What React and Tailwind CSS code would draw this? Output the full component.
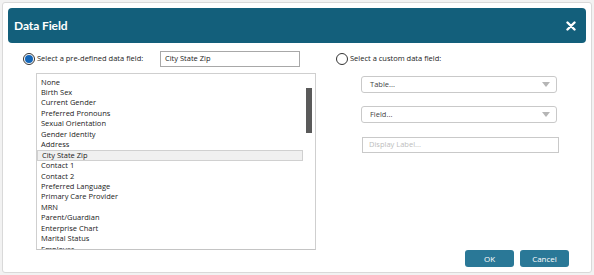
import React from "react";

const items = [
  "None",
  "Birth Sex",
  "Current Gender",
  "Preferred Pronouns",
  "Sexual Orientation",
  "Gender Identity",
  "Address",
  "City State Zip",
  "Contact 1",
  "Contact 2",
  "Preferred Language",
  "Primary Care Provider",
  "MRN",
  "Parent/Guardian",
  "Enterprise Chart",
  "Marital Status",
  "Employer",
];

function Caret() {
  return (
    <svg width="8" height="5" viewBox="0 0 8 5" className="shrink-0">
      <path d="M0 0 L8 0 L4 5 Z" fill="#b5b5b5" />
    </svg>
  );
}

export default function App() {
  return (
    <div
      className="w-[594px] h-[275px] bg-[#f2f2f2] p-[2px] overflow-hidden"
      style={{ fontFamily: '"Open Sans", "Noto Sans", sans-serif' }}
    >
      <div className="w-[590px] h-[271px] bg-white border border-[#d9d9d9] rounded-[3px] px-[5px] pt-[5px] flex flex-col overflow-hidden">
        <div className="h-[35px] bg-[#135f7b] rounded-[4px] flex items-center justify-between pl-[6px] pr-[10px] shrink-0">
          <span className="text-white font-bold text-[12px] tracking-[-0.1px]" style={{ fontFamily: 'Lato, "Open Sans", sans-serif' }}>Data Field</span>
          <svg width="10" height="10" viewBox="0 0 10 10">
            <path d="M1.5 1.5 L8.5 8.5 M8.5 1.5 L1.5 8.5" stroke="white" strokeWidth="2.4" strokeLinecap="round" />
          </svg>
        </div>
        <div className="flex flex-1 min-h-0">
          <div className="w-[324px] shrink-0 flex flex-col pl-[15px] pt-[8px]">
            <div className="flex items-center h-[16px]">
              <span className="w-[12px] h-[12px] rounded-full border border-[#333] flex items-center justify-center bg-white">
                <span className="w-[8px] h-[8px] rounded-full bg-[#1466b8]" />
              </span>
              <span className="ml-[2px] text-[7.5px] text-[#222] w-[123px]">Select a pre-defined data field:</span>
              <div className="w-[140px] h-[16px] border border-[#a8a8a8] flex items-center pl-[4px] text-[7.5px] text-[#222]">
                City State Zip
              </div>
            </div>
            <div className="ml-[13px] mt-[6px] w-[280px] h-[177px] border border-[#cfcfcf] border-b-[#c4c4c4] relative overflow-hidden pt-[3px]">
              {items.map((it) => (
                <div
                  key={it}
                  className={
                    "h-[10.45px] flex items-center pl-[4px] text-[7.5px] text-[#222] whitespace-nowrap mr-[12px] " +
                    (it === "City State Zip" ? "bg-[#f0f0f0] border border-[#d0d0d0] pl-[3px]" : "")
                  }
                >
                  {it}
                </div>
              ))}
              <div className="absolute left-[269px] top-[14px] w-[6px] h-[45px] bg-[#5a5a5a]" />
            </div>
          </div>
          <div className="flex-1 flex flex-col pt-[8px] pl-[4px]">
            <div className="flex items-center h-[16px]">
              <span className="w-[12px] h-[12px] rounded-full border border-[#333] bg-white" />
              <span className="ml-[2px] text-[7.5px] text-[#222]">Select a custom data field:</span>
            </div>
            <div className="ml-[25px] mt-[9px] w-[196px] h-[17px] border border-[#c9c9c9] rounded-[3px] flex items-center justify-between pl-[8px] pr-[6px] text-[7.5px] text-[#444]">
              <span>Table...</span>
              <Caret />
            </div>
            <div className="ml-[25px] mt-[13px] w-[196px] h-[17px] border border-[#c9c9c9] rounded-[3px] flex items-center justify-between pl-[8px] pr-[6px] text-[7.5px] text-[#444]">
              <span>Field...</span>
              <Caret />
            </div>
            <div className="ml-[26px] mt-[14px] w-[197px] h-[16px] border border-[#c9c9c9] flex items-center pl-[6px] text-[7.5px] text-[#bdbdbd]">
              Display Label...
            </div>
            <div className="flex-1" />
            <div className="flex justify-end gap-[6px] pr-[17px] pb-[5px]">
              <div className="w-[49px] h-[17px] rounded-[3px] bg-[#2a7897] text-white text-[8px] flex items-center justify-center">OK</div>
              <div className="w-[49px] h-[17px] rounded-[3px] bg-[#2a7897] text-white text-[8px] flex items-center justify-center">Cancel</div>
            </div>
          </div>
        </div>
      </div>
    </div>
  );
}
